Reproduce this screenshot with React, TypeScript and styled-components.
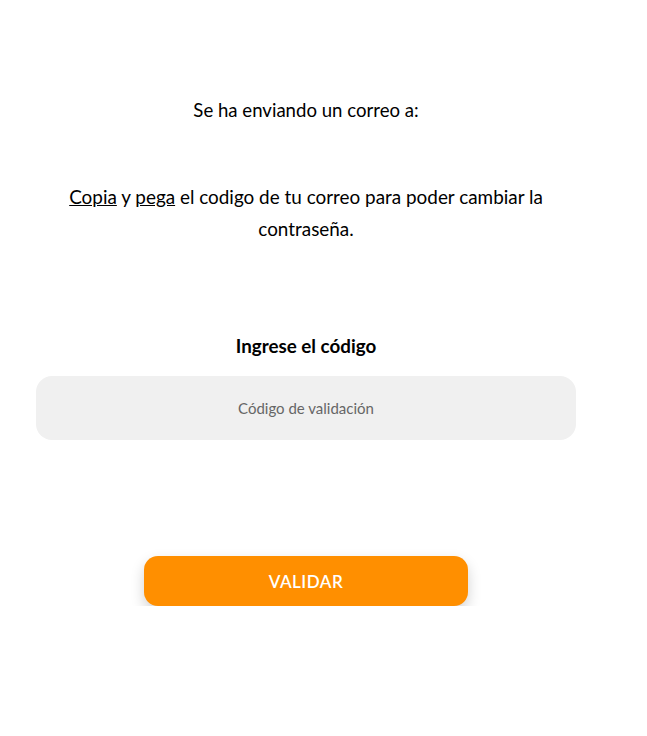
import React from "react";
import styled, { createGlobalStyle } from "styled-components";

const Global = createGlobalStyle`
  html, body { margin: 0; padding: 0; background: #fff; }
  body { font-family: "Lato", "Noto Sans", sans-serif; color: #000; }
`;

const Page = styled.div`
  width: 540px;
  margin-left: 36px;
  padding-top: 98px;
  display: flex;
  flex-direction: column;
  align-items: center;
`;

const Lead = styled.p`
  margin: 0;
  font-size: 18.6px;
  line-height: 24px;
  text-align: center;
`;

const Instructions = styled.p`
  margin: 59px 0 0;
  font-size: 18.9px;
  line-height: 32px;
  text-align: center;
  width: 500px;
`;

const U = styled.span`
  text-decoration: underline;
`;

const Label = styled.label`
  margin-top: 89px;
  font-size: 18.8px;
  font-weight: 700;
  line-height: 24px;
`;

const Input = styled.input`
  box-sizing: border-box;
  margin-top: 18px;
  width: 540px;
  height: 64px;
  border: none;
  border-radius: 16px;
  background: #f0f0f0;
  text-align: center;
  font-family: "Lato", sans-serif;
  font-size: 15px;
  outline: none;
  &::placeholder { color: #666; }
`;

const Button = styled.button`
  margin-top: 116px;
  width: 324px;
  height: 50px;
  border: none;
  border-radius: 14px;
  background: #ff8f00;
  color: #fff;
  font-family: "Lato", sans-serif;
  font-size: 17px;
  font-weight: 600;
  letter-spacing: 0.5px;
  box-shadow: 0 6px 14px rgba(0, 0, 0, 0.18);
  cursor: pointer;
`;

export default function App() {
  return (
    <>
      <Global />
      <Page>
        <Lead>Se ha enviando un correo a:</Lead>
        <Instructions>
          <U>Copia</U> y <U>pega</U> el codigo de tu correo para poder cambiar la contraseña.
        </Instructions>
        <Label>Ingrese el código</Label>
        <Input placeholder="Código de validación" />
        <Button>VALIDAR</Button>
      </Page>
    </>
  );
}
